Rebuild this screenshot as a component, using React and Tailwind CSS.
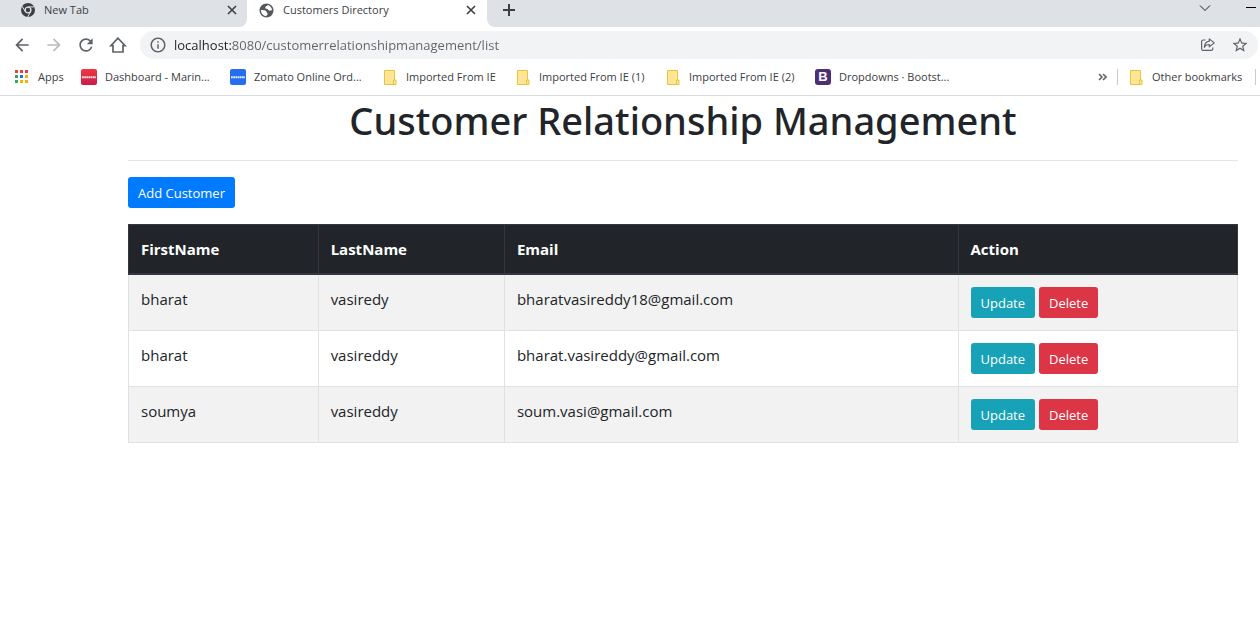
import React from "react";
import { MdArrowBack, MdArrowForward, MdRefresh, MdInfoOutline, MdStarBorder } from "react-icons/md";

const customers = [
  { first: "bharat", last: "vasiredy", email: "bharatvasireddy18@gmail.com" },
  { first: "bharat", last: "vasireddy", email: "bharat.vasireddy@gmail.com" },
  { first: "soumya", last: "vasireddy", email: "soum.vasi@gmail.com" },
];

function ChromeIcon() {
  return (
    <svg width="14" height="14" viewBox="0 0 14 14" aria-hidden="true">
      <circle cx="7" cy="7" r="7" fill="#3c4043" />
      <circle cx="7" cy="7" r="2.900" fill="none" stroke="#dee1e6" strokeWidth="1.400" />
      <path d="M7 3.900h6.300M4.300 8.600 1.100 3.200M9.700 8.600 6.600 14" stroke="#dee1e6" strokeWidth="1" />
    </svg>
  );
}

function GlobeIcon() {
  return (
    <svg width="15" height="15" viewBox="0 0 15 15" aria-hidden="true">
      <circle cx="7.500" cy="7.500" r="7" fill="#54585c" />
      <path d="M8.800 1.900C8.200 3 6.800 3 6.400 4.200c-.3 1 .3 1.500 1.300 1.600 1.300.1 1.300 1.600 2.500 1.800 1 .2 1.500-.6 2.900-.4C13 4.600 11.200 2.500 8.800 1.900Z" fill="#fff" />
      <path d="M1.900 7.100c1.600-.3 3.600-.2 4.900.7 1 .7.600 1.700 1.400 2.300.7.500.5 1.800-.3 2.100-.6.200-.6.600-.7 1C4.200 13 2 10.600 1.900 7.100Z" fill="#fff" />
    </svg>
  );
}

function CloseIcon() {
  return (
    <svg width="14" height="14" viewBox="0 0 14 14" stroke="#3c4043" strokeWidth="1.600" aria-hidden="true">
      <path d="m3 3 8 8M11 3l-8 8" />
    </svg>
  );
}

function PlusIcon() {
  return (
    <svg width="18" height="18" viewBox="0 0 18 18" stroke="#3c4043" strokeWidth="2" aria-hidden="true">
      <path d="M9 3v12M3 9h12" />
    </svg>
  );
}

function HomeIcon() {
  return (
    <svg width="18" height="18" viewBox="0 0 18 18" fill="none" stroke="#5f6368" strokeWidth="1.700" aria-hidden="true">
      <path d="M9 2.200 1.900 9.700H4V16h10V9.700h2.100Z" />
    </svg>
  );
}

function ShareIcon() {
  return (
    <svg width="16" height="16" viewBox="0 0 16 16" fill="none" stroke="#5f6368" strokeWidth="1.200" aria-hidden="true">
      <path d="M5.500 3H3.200C2.200 3 1.600 3.600 1.600 4.600v7.200c0 1 .6 1.600 1.600 1.600h8c1 0 1.600-.6 1.600-1.600V10.500" />
      <path d="M9.300 1.900 14.300 5.900 9.300 9.800V7.500C7 7.500 5.300 8.300 4.300 10.300 4.600 7 6.200 4.600 9.300 4.200Z" strokeLinejoin="round" />
    </svg>
  );
}

function FolderIcon() {
  return (
    <svg width="13" height="15" viewBox="0 0 13 15" aria-hidden="true">
      <path d="M.5.5h10v9.500h1.500v4.500H.5z" fill="#ffe694" stroke="#e8c341" />
      <path d="M9.500 14.500v-4.500h1.500" fill="none" stroke="#e8c341" />
    </svg>
  );
}

function AppsIcon() {
  const colors = ["#ea4335", "#ea4335", "#ea4335", "#34a853", "#1a73e8", "#fbaf00", "#34a853", "#fbaf00", "#fbaf00"];
  return (
    <svg width="14" height="14" viewBox="0 0 14 14" aria-hidden="true">
      {colors.map((c, i) => (
        <rect key={i} x={(i % 3) * 5} y={Math.floor(i / 3) * 5} width="3" height="3" fill={c} />
      ))}
    </svg>
  );
}

function ZomatoIcon({ className }) {
  return (
    <span className={`flex size-4 items-center justify-center rounded-xs ${className}`} aria-hidden="true">
      <svg width="14" height="4" viewBox="0 0 14 4">
        <path d="M0 2.200h14" stroke="#fff" strokeWidth="2" strokeDasharray="1.800 .4" opacity=".85" />
      </svg>
    </span>
  );
}

function BootstrapIcon() {
  return (
    <span className="flex size-4 items-center justify-center rounded-[3px] bg-[#4c2f74] font-['Liberation_Sans',sans-serif] text-[13px] leading-4 font-bold text-white">
      B
    </span>
  );
}

function Bookmark({ icon, className, children }) {
  return (
    <a href="#" className={`flex shrink-0 items-center whitespace-nowrap ${className}`}>
      {icon}
      {children}
    </a>
  );
}

function TabStrip() {
  return (
    <div className="flex h-[27px] bg-white text-[11px] leading-4 text-[#3c4043]">
      <div className="flex w-[247px] shrink-0 items-center rounded-br-lg bg-[#dee1e6] pr-2 pb-[7px] pl-[21px]">
        <ChromeIcon />
        <span className="ml-[9px] flex-1">New Tab</span>
        <button aria-label="Close New Tab"><CloseIcon /></button>
      </div>
      <div className="flex w-60 shrink-0 items-center pr-[9px] pb-[7px] pl-3">
        <GlobeIcon />
        <span className="ml-[9px] flex-1">Customers Directory</span>
        <button aria-label="Close Customers Directory"><CloseIcon /></button>
      </div>
      <div className="flex flex-1 items-center justify-between rounded-bl-lg bg-[#dee1e6] pr-1 pb-[7px] pl-[13px]">
        <button aria-label="New tab"><PlusIcon /></button>
        <div className="flex items-center gap-[35px] pb-1">
          <button aria-label="Search tabs">
            <svg width="12" height="8" viewBox="0 0 12 8" fill="none" stroke="#202124"><path d="m1 1.500 5 5 5-5" /></svg>
          </button>
          <button aria-label="Minimize">
            <svg width="10" height="8" viewBox="0 0 10 8"><path d="M0 3.500h10" stroke="#000" /></svg>
          </button>
        </div>
      </div>
    </div>
  );
}

function Toolbar() {
  return (
    <div className="flex h-9 items-center pr-0.5 pl-3 text-[#5f6368]">
      <button aria-label="Back"><MdArrowBack size={20} /></button>
      <button aria-label="Forward" className="ml-3 text-[#babcbe]"><MdArrowForward size={20} /></button>
      <button aria-label="Reload" className="ml-3"><MdRefresh size={20} /></button>
      <button aria-label="Home" className="ml-[13px]"><HomeIcon /></button>
      <div className="ml-[13px] flex h-7 flex-1 items-center rounded-full bg-[#f1f3f4] px-[9px]">
        <MdInfoOutline size={18} />
        <input
          aria-label="Address"
          className="ml-[7px] h-5 min-w-0 flex-1 bg-linear-to-r from-[#202124] from-[58px] to-[#5f6368] to-[58px] bg-clip-text text-[13px] leading-5 text-transparent outline-none"
          defaultValue="localhost:8080/customerrelationshipmanagement/list"
        />
        <button aria-label="Share"><ShareIcon /></button>
        <button aria-label="Bookmark this page" className="ml-[15px]"><MdStarBorder size={18} /></button>
      </div>
    </div>
  );
}

function BookmarksBar() {
  return (
    <nav className="flex h-[33px] items-center border-b border-[#dadce0] pb-1 pl-[15px] text-[11px] leading-4 text-[#3c4043]">
      <Bookmark icon={<AppsIcon />} className="w-[66px] gap-[9px]">Apps</Bookmark>
      <Bookmark icon={<ZomatoIcon className="bg-linear-to-b from-[#f0373f] to-[#cb1a4a]" />} className="w-[149px] gap-2">Dashboard - Marin...</Bookmark>
      <Bookmark icon={<ZomatoIcon className="bg-[#256fef]" />} className="w-[154px] gap-2">Zomato Online Ord...</Bookmark>
      <Bookmark icon={<FolderIcon />} className="w-[133px] gap-[9px]">Imported From IE</Bookmark>
      <Bookmark icon={<FolderIcon />} className="w-[150px] gap-[9px]">Imported From IE (1)</Bookmark>
      <Bookmark icon={<FolderIcon />} className="w-[148px] gap-[9px]">Imported From IE (2)</Bookmark>
      <Bookmark icon={<BootstrapIcon />} className="gap-2">Dropdowns · Bootst...</Bookmark>
      <div className="ml-auto flex items-center">
        <button aria-label="More bookmarks">
          <svg width="9" height="8" viewBox="0 0 9 8" fill="none" stroke="#5f6368" strokeWidth="1.600"><path d="m1 1 3 3-3 3M5 1l3 3-3 3" /></svg>
        </button>
        <span className="ml-[10px] h-4 w-px bg-[#c8cacd]" />
        <Bookmark icon={<FolderIcon />} className="ml-3 w-[125px] gap-[9px]">Other bookmarks</Bookmark>
        <span className="mr-1 h-4 w-px bg-[#c8cacd]" />
      </div>
    </nav>
  );
}

function Button({ className, children }) {
  return (
    <button className={`h-[31px] rounded-[3px] px-[10px] text-[13px] leading-5 whitespace-nowrap text-white ${className}`}>
      {children}
    </button>
  );
}

export default function App() {
  return (
    <div className="min-h-screen bg-white font-['Open_Sans',sans-serif]">
      <header>
        <TabStrip />
        <Toolbar />
        <BookmarksBar />
      </header>
      <main className="pr-[22px] pl-32 text-[#212529]">
        <h1 className="pt-px text-center font-['Noto_Sans',sans-serif] text-[38px] leading-[47px] font-medium">Customer Relationship Management</h1>
        <hr className="my-4 border-[#e5e5e5]" />
        <Button className="bg-[#007bff]">Add Customer</Button>
        <table className="mt-4 w-full table-fixed border-collapse text-left text-[15px] leading-6">
          <colgroup>
            <col className="w-[17.1%]" />
            <col className="w-[16.8%]" />
            <col className="w-[40.9%]" />
            <col />
          </colgroup>
          <thead className="bg-[#212529] text-white">
            <tr>
              {["FirstName", "LastName", "Email", "Action"].map((name) => (
                <th key={name} scope="col" className="border border-b-2 border-[#32383e] p-3 font-bold">{name}</th>
              ))}
            </tr>
          </thead>
          <tbody>
            {customers.map((c) => (
              <tr key={c.email} className="odd:bg-[#f2f2f2]">
                <td className="border border-[#dee2e6] p-3 align-top">{c.first}</td>
                <td className="border border-[#dee2e6] p-3 align-top">{c.last}</td>
                <td className="border border-[#dee2e6] p-3 align-top">{c.email}</td>
                <td className="border border-[#dee2e6] p-3 align-top">
                  <div className="flex gap-1">
                    <Button className="bg-[#17a2b8]">Update</Button>
                    <Button className="bg-[#dc3545]">Delete</Button>
                  </div>
                </td>
              </tr>
            ))}
          </tbody>
        </table>
      </main>
    </div>
  );
}
